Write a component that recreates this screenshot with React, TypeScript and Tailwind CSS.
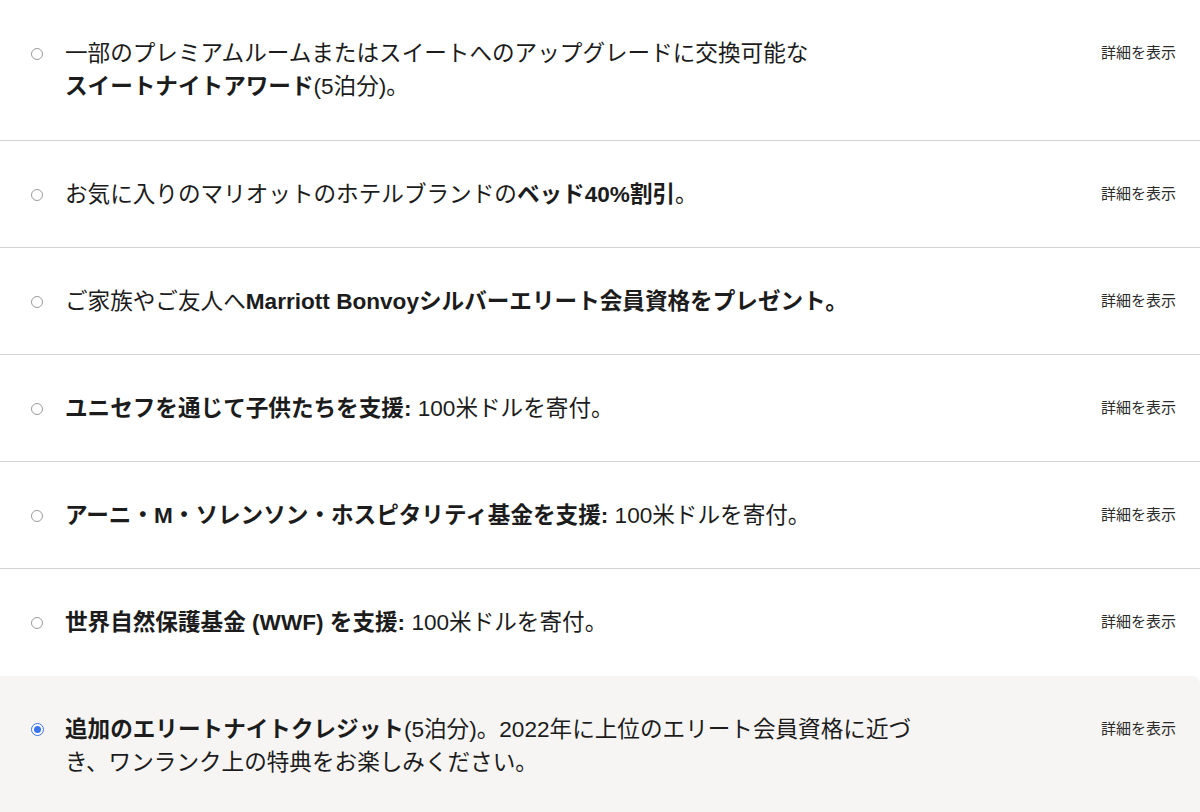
import React from "react";

type Option = {
  id: string;
  content: React.ReactNode;
};

const options: Option[] = [
  {
    id: "suite",
    content: (
      <>
        一部のプレミアムルームまたはスイートへのアップグレードに交換可能な
        <br />
        <b className="font-bold">スイートナイトアワード</b>(5泊分)。
      </>
    ),
  },
  {
    id: "bed",
    content: (
      <>
        お気に入りのマリオットのホテルブランドの
        <b className="font-bold">ベッド40%割引</b>。
      </>
    ),
  },
  {
    id: "silver",
    content: (
      <>
        ご家族やご友人へ
        <b className="font-bold">Marriott Bonvoyシルバーエリート会員資格をプレゼント。</b>
      </>
    ),
  },
  {
    id: "unicef",
    content: (
      <>
        <b className="font-bold">ユニセフを通じて子供たちを支援:</b> 100米ドルを寄付。
      </>
    ),
  },
  {
    id: "arne",
    content: (
      <>
        <b className="font-bold">アーニ・M・ソレンソン・ホスピタリティ基金を支援:</b> 100米ドルを寄付。
      </>
    ),
  },
  {
    id: "wwf",
    content: (
      <>
        <b className="font-bold">世界自然保護基金 (WWF) を支援:</b> 100米ドルを寄付。
      </>
    ),
  },
  {
    id: "credit",
    content: (
      <>
        <b className="font-bold">追加のエリートナイトクレジット</b>(5泊分)。2022年に上位のエリート会員資格に近づき、ワンランク上の特典をお楽しみください。
      </>
    ),
  },
];

const Radio = ({ checked }: { checked: boolean }) =>
  checked ? (
    <span className="flex h-[13px] w-[13px] items-center justify-center rounded-full border border-[#3a73ee] bg-white">
      <span className="h-[7px] w-[7px] rounded-full bg-[#3a73ee]" />
    </span>
  ) : (
    <span className="h-[12px] w-[12px] rounded-full border border-[#9b9b9b] bg-white" />
  );

export default function App() {
  const selected = "credit";

  return (
    <div
      className="min-h-screen w-[1200px] overflow-hidden bg-white text-[#1c1c1c]"
      style={{ fontFamily: '"Liberation Sans", "Noto Sans CJK JP", sans-serif' }}
    >
      {options.map((opt, i) => {
        const checked = opt.id === selected;
        // the row right above the selected one has no visible divider
        const beforeSelected = options[i + 1]?.id === selected;
        let rowClass = "flex items-start pl-[31px] pr-[24px] pt-[37px]";
        rowClass += i === 0 ? " pb-[37px]" : " pb-[36px]";
        if (checked) {
          rowClass += " rounded-tr-lg bg-[#f6f5f3]";
        } else if (beforeSelected) {
          rowClass += " border-b border-transparent";
        } else {
          rowClass += " border-b border-[#d2d2d2]";
        }
        return (
          <div key={opt.id} className={rowClass}>
            <div className="flex h-[33px] w-[34px] shrink-0 items-center">
              <Radio checked={checked} />
            </div>
            <p className="w-[856px] text-[22.6px] leading-[33px]">{opt.content}</p>
            <div className="ml-auto flex h-[33px] items-center">
              <span className="text-[15px] text-[#2b2b2b]">詳細を表示</span>
            </div>
          </div>
        );
      })}
    </div>
  );
}
